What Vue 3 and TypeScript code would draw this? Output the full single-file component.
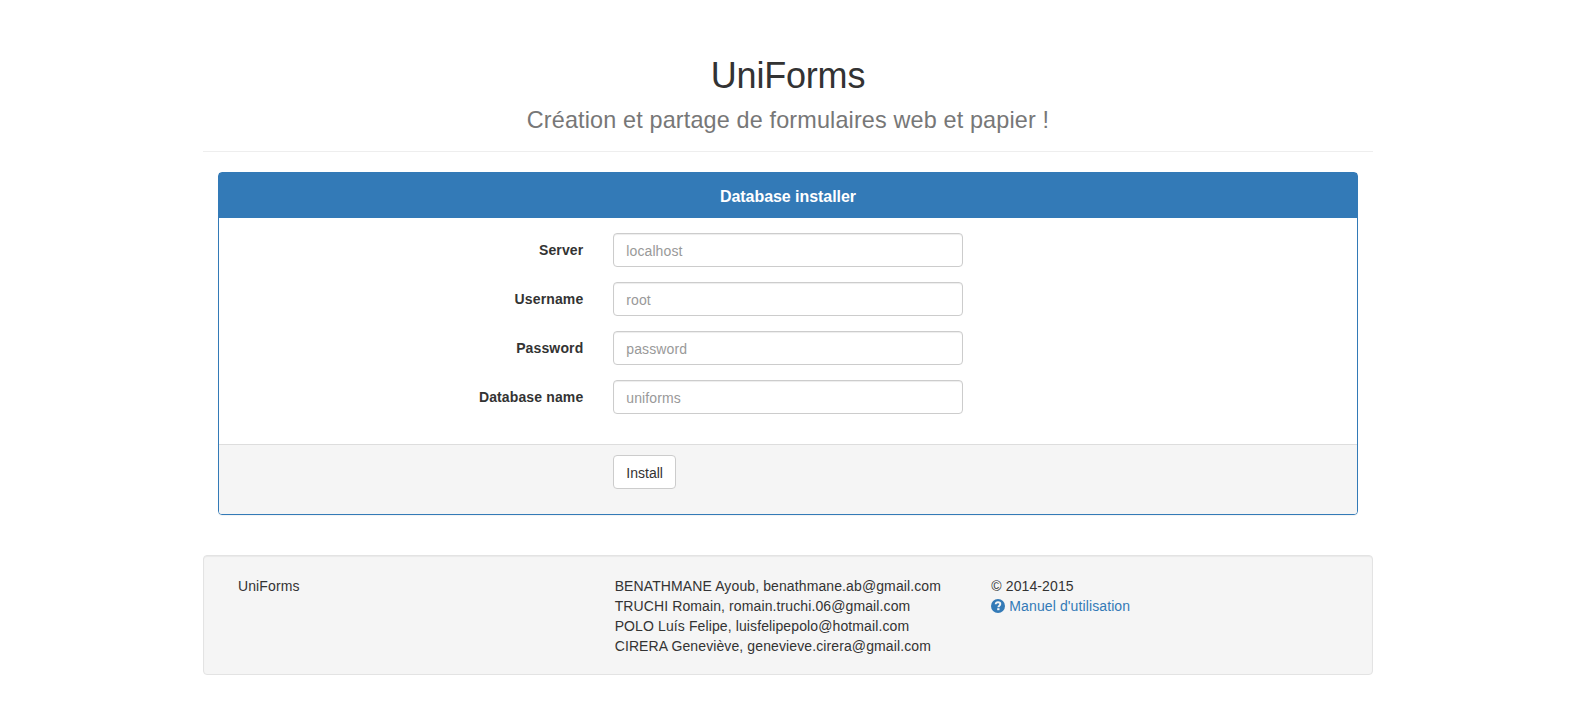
<script setup lang="ts">
interface Field { id: string; label: string; placeholder: string; type: string }

const fields: Field[] = [
  { id: 'server', label: 'Server', placeholder: 'localhost', type: 'text' },
  { id: 'username', label: 'Username', placeholder: 'root', type: 'text' },
  { id: 'password', label: 'Password', placeholder: 'password', type: 'password' },
  { id: 'database', label: 'Database name', placeholder: 'uniforms', type: 'text' },
]

const authors: string[] = [
  'BENATHMANE Ayoub, benathmane.ab@gmail.com',
  'TRUCHI Romain, romain.truchi.06@gmail.com',
  'POLO Luís Felipe, luisfelipepolo@hotmail.com',
  'CIRERA Geneviève, genevieve.cirera@gmail.com',
]
</script>

<template>
  <div class="page">
    <div class="container">
      <header class="page-header">
        <h1>UniForms</h1>
        <p class="tagline">Création et partage de formulaires web et papier !</p>
      </header>

      <form class="panel" @submit.prevent>
        <div class="panel-heading">Database installer</div>
        <div class="panel-body">
          <div v-for="f in fields" :key="f.id" class="form-group">
            <label :for="f.id">{{ f.label }}</label>
            <div class="control"><input :id="f.id" :type="f.type" :placeholder="f.placeholder"></div>
          </div>
        </div>
        <div class="panel-footer">
          <button type="submit">Install</button>
        </div>
      </form>

      <footer class="well">
        <div class="col">UniForms</div>
        <div class="col">
          <div v-for="a in authors" :key="a">{{ a }}</div>
        </div>
        <div class="col">
          <div>© 2014-2015</div>
          <a href="#"><svg class="icon" viewBox="0 0 14 14" aria-hidden="true"><circle cx="7" cy="7" r="7" fill="currentColor" /><path d="M4.7 5.3C4.7 3.9 5.6 3.3 7 3.3c1.4 0 2.3.6 2.3 1.8 0 1.6-1.9 1.5-1.9 3.1" fill="none" stroke="#f5f5f5" stroke-width="1.9" /><path d="M6.2 9.2h2.3v2H6.2z" fill="#f5f5f5" /></svg> Manuel d'utilisation</a>
        </div>
      </footer>
    </div>
  </div>
</template>

<style>
body { margin: 0; background: #fff; }
</style>

<style scoped>
.page { padding-right: 8px; }
.container, .container * { box-sizing: border-box; }
.container {
  width: 1170px;
  margin: 0 auto;
  padding: 40px 0 0;
  font-family: "Liberation Sans", Arial, sans-serif;
  font-size: 14px;
  line-height: 20px;
  color: #333;
}
.page-header {
  height: 112px;
  padding-top: 16px;
  border-bottom: 1px solid #eee;
  text-align: center;
}
h1 { margin: 0; font-size: 36px; font-weight: 400; line-height: 40px; letter-spacing: -.2px; }
.tagline { margin: 4px 0 0; font-size: 23.4px; line-height: 40px; letter-spacing: .15px; color: #777; }
.panel {
  margin: 20px 15px 0;
  border: 1px solid #337ab7;
  border-radius: 4px;
  box-shadow: 0 1px 1px rgba(0, 0, 0, .05);
}
.panel-heading {
  height: 45px;
  padding: 15px 15px 0;
  background: #337ab7;
  color: #fff;
  font-size: 16px;
  font-weight: 700;
  text-align: center;
  line-height: 18px;
  letter-spacing: -.05px;
}
.panel-body { padding: 15px; }
.form-group { display: grid; grid-template-columns: repeat(3, 1fr); margin: 0 -15px 15px; }
label { padding: 7px 15px 0; text-align: right; font-weight: 700; letter-spacing: .13px; }
.control { padding: 0 15px; }
input {
  display: block;
  width: 100%;
  height: 34px;
  padding: 7px 12px 5px;
  border: 1px solid #ccc;
  border-radius: 4px;
  background: #fff;
  color: #555;
  font: inherit;
  letter-spacing: .1px;
  box-shadow: inset 0 1px 1px rgba(0, 0, 0, .075);
}
input::placeholder { color: #999; opacity: 1; }
.panel-footer {
  height: 70px;
  padding: 10px 0 0 calc(33.3333% + 15px);
  border-top: 1px solid #ddd;
  border-radius: 0 0 3px 3px;
  background: #f5f5f5;
}
button {
  display: block;
  height: 34px;
  padding: 7px 12px 5px;
  border: 1px solid #ccc;
  border-radius: 4px;
  background: #fff;
  color: #333;
  font: inherit;
}
.well {
  display: grid;
  grid-template-columns: repeat(3, 1fr);
  height: 120px;
  margin-top: 40px;
  padding: 20px 19px;
  border: 1px solid #e3e3e3;
  border-radius: 4px;
  background: #f5f5f5;
  box-shadow: inset 0 1px 1px rgba(0, 0, 0, .05);
}
.col { padding: 0 15px; white-space: nowrap; letter-spacing: .11px; }
a { color: #337ab7; text-decoration: none; }
.icon { display: inline-block; width: 14px; height: 14px; vertical-align: -2px; }
</style>
